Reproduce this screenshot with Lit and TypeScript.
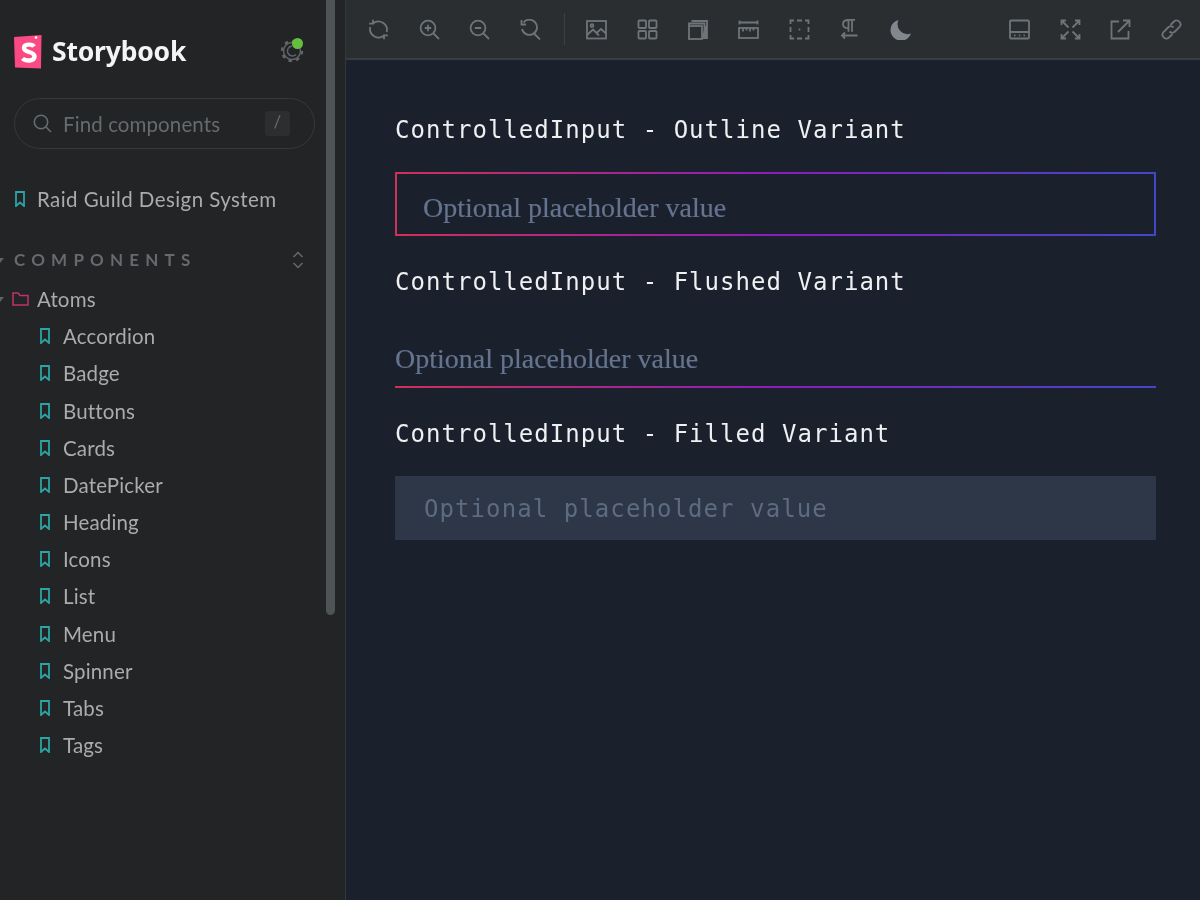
// app.ts
// Storybook shell showing the ControlledInput variants

import { LitElement, html, css, svg } from 'lit';
import { customElement } from 'lit/decorators.js';

const ICONS = {
  sync: svg`<path d="M5 4.500A8.500 8.500 0 0 1 18.700 13M16 16.500A8.500 8.500 0 0 1 2.300 8"/><path d="M5 .8v3.900H1.200M16 20.200v-3.900h3.800"/>`,
  zoomIn: svg`<circle cx="9" cy="9" r="7.400"/><path d="M14.500 14.500 20 20M9 5.800v6.400M5.800 9h6.400"/>`,
  zoomOut: svg`<circle cx="9" cy="9" r="7.400"/><path d="M14.500 14.500 20 20M5.800 9h6.400"/>`,
  zoomReset: svg`<path d="M3.500 3.500A7.600 7.600 0 1 1 2 10M14.500 15 20 20.500"/><path d="M1.500 1v4.500H6"/>`,
  image: svg`<rect x="1" y="2" width="19" height="17.500"/><circle cx="6" cy="6.500" r="1.400"/><path d="M1 16 7 10.500l6 6M10.500 14l4.500-4 5 4.500"/>`,
  grid: svg`<rect x="1.500" y="1.500" width="7.500" height="7.500" rx=".8"/><rect x="12" y="1.500" width="7.500" height="7.500" rx=".8"/><rect x="1.500" y="12" width="7.500" height="7.500" rx=".8"/><rect x="12" y="12" width="7.500" height="7.500" rx=".8"/>`,
  outline: svg`<rect x="1" y="7" width="13" height="13"/><path d="M1 7V4.500h15.500V20M3.500 2H19v18"/><path d="M16.500 7H19v13h-5z" fill="currentColor" stroke="none"/>`,
  ruler: svg`<path d="M1 3.500h19M1.500 1.500v4M19.500 1.500v4"/><rect x="1" y="9" width="19" height="10"/><path d="M5 9v3.500M8.500 9v2.500M12 9v3.500M15.500 9v2.500"/>`,
  region: svg`<path d="M1.500 5V1.500H5M8 1.500h5M16 1.500h3.500V5M19.500 8v5M19.500 16v3.500H16M13 19.500H8M5 19.500H1.500V16M1.500 13V8"/><circle cx="10.500" cy="10.500" r="1" fill="currentColor" stroke="none"/>`,
  pilcrow: svg`<path d="M8 .8h8M9.500 .8v12M13 .8v12M9.500 1C5.500 1 4 3 4 5.200s1.500 4 5.500 4"/><path d="M3 16.500h15.500M6 13.500l-3 3 3 3"/>`,
  panel: svg`<rect x="1" y="1.500" width="19" height="18" rx="1"/><path d="M1 13h19M5 16.300h1.500M9.800 16.300h1.500M14.500 16.300H16"/>`,
  fullscreen: svg`<path d="m2 2 6.500 6.500M19 2l-6.500 6.500M2 19l6.500-6.500M19 19l-6.500-6.500M1.500 6V1.500H6M15 1.500h4.500V6M1.500 15v4.500H6M15 19.500h4.500V15"/>`,
  share: svg`<path d="M9 2.500H1.500v17h17V12M8 13 19.500 1.500M13 1.500h6.500V8"/>`,
  link: svg`<path d="M9.500 6 13 2.500a3.900 3.900 0 0 1 5.500 5.500l-4.500 4.500a3.900 3.900 0 0 1-5.500 0M11.500 15 8 18.500A3.900 3.900 0 0 1 2.500 13L7 8.500a3.900 3.900 0 0 1 5.500 0"/>`,
};

const MOON = svg`<path d="M8.500 1A10 10 0 0 0 21 14.500 10.500 10.500 0 1 1 8.500 1z" fill="currentColor" stroke="none"/>`;

const LEFT_TOOLS = ['sync', 'zoomIn', 'zoomOut', 'zoomReset'] as const;
const MID_TOOLS = ['image', 'grid', 'outline', 'ruler', 'region', 'pilcrow'] as const;
const RIGHT_TOOLS = ['panel', 'fullscreen', 'share', 'link'] as const;

const ATOMS = [
  'Accordion', 'Badge', 'Buttons', 'Cards', 'DatePicker', 'Heading',
  'Icons', 'List', 'Menu', 'Spinner', 'Tabs', 'Tags',
];

const bookmark = html`<svg class="bookmark" viewBox="0 0 10 16"><path d="M1 1h8v14L5 11.500 1 15z"/></svg>`;

@customElement('app-root')
export class AppRoot extends LitElement {
  static styles = css`
    :host {
      display: grid;
      grid-template-columns: 345px 1fr;
      width: 1200px;
      height: 900px;
      overflow: hidden;
      background: #1a202c;
      font-family: 'Lato', 'Noto Sans', sans-serif;
      filter: blur(0.6px);
    }

    /* sidebar */
    .sidebar {
      position: relative;
      background: #222426;
      overflow: hidden;
      display: flex;
      flex-direction: column;
    }

    .scrollbar {
      position: absolute;
      left: 326px;
      top: -6px;
      width: 9px;
      height: 621px;
      border-radius: 5px;
      background: #4e5356;
    }

    .brand {
      display: flex;
      align-items: center;
      height: 36px;
      margin: 33px 0 0 14px;
    }

    .logo {
      width: 28px;
      height: 35px;
      flex: none;
    }

    .wordmark {
      margin-left: 10px;
      font-size: 26.500px;
      font-weight: 700;
      color: #f4f4f4;
      font-family: 'Noto Sans', sans-serif;
      letter-spacing: -0.2px;
    }

    .gear {
      position: relative;
      width: 24px;
      height: 24px;
      margin-left: 94px;
      color: #62666a;
    }

    .gear svg {
      width: 24px;
      height: 24px;
      fill: none;
      stroke: currentColor;
      stroke-width: 1.400;
    }

    .gear .teeth {
      stroke-width: 2.400;
      stroke-dasharray: 3.500 4.350;
    }

    .gear i {
      position: absolute;
      top: -1.500px;
      right: 1px;
      width: 11px;
      height: 11px;
      border-radius: 50%;
      background: #66bf3c;
    }

    .search {
      display: flex;
      align-items: center;
      box-sizing: border-box;
      width: 301px;
      height: 51px;
      margin: 29px 0 0 14px;
      padding: 0 24px 0 18px;
      border: 1.500px solid #363839;
      border-radius: 26px;
      color: #666b6f;
      font-size: 20.500px;
      letter-spacing: 0.1px;
    }

    .search svg {
      width: 19px;
      height: 19px;
      fill: none;
      stroke: currentColor;
      stroke-width: 1.600;
      flex: none;
    }

    .search span {
      margin-left: 11px;
      flex: 1;
    }

    .search kbd {
      width: 25px;
      height: 25px;
      border-radius: 3px;
      background: #2c2e30;
      text-align: center;
      line-height: 25px;
      font: inherit;
      font-size: 17px;
    }

    .row {
      display: flex;
      align-items: center;
      height: 37.200px;
      flex: none;
      color: #a9abad;
      font-size: 20.500px;
      letter-spacing: 0.15px;
    }

    .top-story {
      margin-top: 31px;
      padding-left: 15px;
      letter-spacing: 0.42px;
    }

    .top-story .bookmark {
      margin-right: 12px;
    }

    .section {
      position: relative;
      margin-top: 24px;
      padding-left: 14px;
      color: #66696d;
      font-size: 17px;
      font-weight: 700;
      letter-spacing: 6.200px;
    }

    .section svg {
      position: absolute;
      left: 291px;
      top: 9px;
      width: 14px;
      height: 20px;
      fill: none;
      stroke: currentColor;
      stroke-width: 1.500;
    }

    .caret {
      position: absolute;
      left: -4px;
      top: 50%;
      margin-top: -2px;
      width: 0;
      height: 0;
      border-left: 4px solid transparent;
      border-right: 4px solid transparent;
      border-top: 5px solid #5f6265;
    }

    .group {
      position: relative;
      margin-top: 2px;
      padding-left: 12px;
    }

    .folder {
      width: 17px;
      height: 14px;
      margin-right: 8px;
      fill: none;
      stroke: #c0326a;
      stroke-width: 1.500;
    }

    .story {
      padding-left: 40px;
    }

    .story .bookmark {
      margin-right: 13px;
    }

    .bookmark {
      width: 10px;
      height: 16px;
      flex: none;
      fill: none;
      stroke: #2ba5a5;
      stroke-width: 1.800;
    }

    /* preview */
    .preview {
      display: flex;
      flex-direction: column;
      border-left: 1px solid #35383b;
      min-width: 0;
    }

    .toolbar {
      display: flex;
      align-items: center;
      box-sizing: border-box;
      height: 60px;
      flex: none;
      padding: 0 18px 0 22px;
      background: #2b2e31;
      border-bottom: 2px solid #3a3d3f;
      color: #6f7478;
    }

    .tool {
      width: 21px;
      height: 21px;
      margin-right: 29.600px;
      flex: none;
    }

    .tool svg {
      display: block;
      width: 100%;
      height: 100%;
      fill: none;
      stroke: currentColor;
      stroke-width: 1.800;
    }

    .tool.moon {
      color: #82878d;
    }

    .divider {
      width: 1px;
      height: 32px;
      margin: 0 21.600px 0 -6.600px;
      background: #3d4043;
    }

    .spacer {
      flex: 1;
    }

    .toolbar .tools-end .tool:last-child {
      margin-right: 0;
    }

    .tools-end {
      display: flex;
    }

    .content {
      display: flex;
      flex-direction: column;
      padding: 52px 44px 0 49px;
    }

    .title {
      height: 36px;
      line-height: 36px;
      color: #eef0f2;
      font-family: 'DejaVu Sans Mono', monospace;
      font-size: 24px;
      letter-spacing: 1.030px;
      white-space: nowrap;
    }

    .field {
      box-sizing: border-box;
      height: 64px;
      margin: 24px 0 28px;
      display: flex;
      align-items: center;
      padding-top: 8px;
      color: #64748e;
      font-family: 'Liberation Serif', serif;
      font-size: 28px;
      white-space: nowrap;
      -webkit-text-stroke: 0.2px #64748e;
    }

    .outline {
      padding-left: 26px;
      border: 2px solid;
      border-image: linear-gradient(to right, #d03058, #8b1dba 50%, #4048c8) 1;
    }

    .flushed {
      border-bottom: 2px solid;
      border-image: linear-gradient(to right, #d03058, #8b1dba 50%, #4048c8) 1;
    }

    .filled {
      padding: 2px 0 0 29px;
      background: #2d3748;
      color: #5d6b80;
      font-family: 'DejaVu Sans Mono', monospace;
      font-size: 24px;
      letter-spacing: 1.080px;
      -webkit-text-stroke: 0;
    }
  `;

  private tool(name: keyof typeof ICONS) {
    return html`<div class="tool"><svg viewBox="0 0 21 21">${ICONS[name]}</svg></div>`;
  }

  render() {
    return html`
      <aside class="sidebar">
        <div class="scrollbar"></div>
        <div class="brand">
          <svg class="logo" viewBox="0 0 28 35">
            <path d="M0 3 27.500 1l-.5 33.500L1 33.500z" fill="#fb4a83"/>
            <circle cx="22" cy="3.500" r="1.300" fill="#fff"/>
            <path d="M20 12.500c-1.500-2.500-10-3-10 1.500 0 5 10.500 3 10.500 8.500 0 5-9 5-12 2" fill="none" stroke="#fff" stroke-width="4.400"/>
          </svg>
          <span class="wordmark">Storybook</span>
          <div class="gear">
            <svg viewBox="0 0 24 24">
              <circle cx="12" cy="12" r="8.500"/>
              <circle class="teeth" cx="12" cy="12" r="10"/>
              <path d="M16 15.500a5 5 0 1 1-4-8.500"/>
            </svg>
            <i></i>
          </div>
        </div>

        <div class="search">
          <svg viewBox="0 0 19 19"><circle cx="8" cy="8" r="6.700"/><path d="m13 13 5 5"/></svg>
          <span>Find components</span>
          <kbd>/</kbd>
        </div>

        <div class="row top-story">${bookmark}Raid Guild Design System</div>

        <div class="row section">
          <i class="caret"></i>COMPONENTS
          <svg viewBox="0 0 14 20"><path d="m2.500 7 4.500-4.500L11.500 7M2.500 13l4.500 4.500 4.500-4.500"/></svg>
        </div>

        <div class="row group">
          <i class="caret"></i>
          <svg class="folder" viewBox="0 0 17 14"><path d="M1 1h5l2 2.500h8V13H1z"/></svg>Atoms
        </div>

        ${ATOMS.map(name => html`<div class="row story">${bookmark}${name}</div>`)}
      </aside>

      <section class="preview">
        <div class="toolbar">
          ${LEFT_TOOLS.map(name => this.tool(name))}
          <div class="divider"></div>
          ${MID_TOOLS.map(name => this.tool(name))}
          <div class="tool moon"><svg viewBox="0 0 21 21">${MOON}</svg></div>
          <div class="spacer"></div>
          <div class="tools-end">${RIGHT_TOOLS.map(name => this.tool(name))}</div>
        </div>

        <div class="content">
          <div class="title">ControlledInput - Outline Variant</div>
          <div class="field outline">Optional placeholder value</div>
          <div class="title">ControlledInput - Flushed Variant</div>
          <div class="field flushed">Optional placeholder value</div>
          <div class="title">ControlledInput - Filled Variant</div>
          <div class="field filled">Optional placeholder value</div>
        </div>
      </section>
    `;
  }
}

declare global {
  interface HTMLElementTagNameMap {
    'app-root': AppRoot;
  }
}
